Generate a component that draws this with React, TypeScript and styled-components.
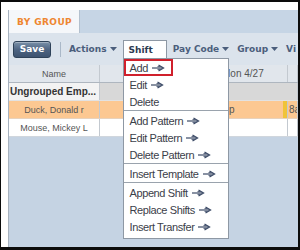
import React from 'react';
import styled, { createGlobalStyle } from 'styled-components';

const GlobalStyle = createGlobalStyle`
  html, body {
    margin: 0;
    padding: 0;
    background: #000;
  }
  body {
    font-family: 'Liberation Sans', Arial, sans-serif;
  }
`;

const COLS = '91px 99px 89px 1fr';

const Frame = styled.div`
  width: 300px;
  height: 250px;
  box-sizing: border-box;
  background: #0c0c0c;
  padding: 2px 2px 3px 1px;
  display: flex;
`;

const Sheet = styled.div`
  flex: 1;
  display: flex;
  background: #fff;
  padding: 8px 0 0 7px;
  overflow: hidden;
`;

const Panel = styled.div`
  flex: 1;
  display: flex;
  flex-direction: column;
  border-left: 1px solid #a7b2bf;
  background: #c5d3e3;
  min-width: 0;
`;

const TabStrip = styled.div`
  height: 23px;
  display: flex;
  background: #c6d5e5;
`;

const Tab = styled.div`
  width: 71px;
  display: flex;
  align-items: center;
  padding-left: 8px;
  box-sizing: border-box;
  background: #f5f7fa;
  border-right: 1px solid #b3c0ce;
  font-family: 'DejaVu Sans', Verdana, sans-serif;
  font-weight: bold;
  font-size: 9px;
  letter-spacing: 0.4px;
  color: #ee8630;
`;

const Toolbar = styled.div`
  height: 32px;
  display: flex;
  align-items: center;
  gap: 4px;
  padding-left: 4px;
  background: #dbe3ec;
  white-space: nowrap;
  font-family: 'DejaVu Sans', Verdana, sans-serif;
  font-weight: bold;
  font-size: 9px;
`;

const SaveButton = styled.div`
  width: 42px;
  height: 17px;
  box-sizing: border-box;
  display: flex;
  align-items: center;
  justify-content: center;
  border: 1px solid #2e4259;
  border-radius: 3px;
  background: linear-gradient(#7a90a8, #4b6280 55%, #3d5370);
  box-shadow: inset 0 1px 0 rgba(255, 255, 255, 0.3);
  color: #fff;
`;

const Divider = styled.div`
  width: 1px;
  height: 15px;
  margin: 0 2px 0 5px;
  background: #aab8c8;
`;

const MenuButton = styled.div<{ $active?: boolean }>`
  display: flex;
  align-items: center;
  gap: 3px;
  height: 18px;
  box-sizing: border-box;
  padding: ${p => (p.$active ? '0 13px 0 5px' : '0 2px')};
  color: ${p => (p.$active ? '#2e3b52' : '#4b5e7c')};
  background: ${p => (p.$active ? '#fff' : 'transparent')};
  border: ${p => (p.$active ? '1px solid #8e98a4' : 'none')};
  border-bottom: none;
`;

const MenuAnchor = styled.div`
  position: relative;
  z-index: 5;
`;

const Dropdown = styled.div`
  position: absolute;
  top: 100%;
  left: 0;
  width: 106px;
  box-sizing: border-box;
  padding-bottom: 3px;
  background: #fff;
  border: 1px solid #8e98a4;
  font-family: 'Liberation Sans', Arial, sans-serif;
  font-weight: normal;
  font-size: 11px;
  letter-spacing: -0.4px;
  color: #3b4049;
`;

const Item = styled.div<{ $highlight?: boolean }>`
  height: 17px;
  display: flex;
  align-items: center;
  gap: 4px;
  padding-left: 6px;
  box-sizing: border-box;
  width: ${p => (p.$highlight ? '49px' : 'auto')};
  box-shadow: ${p => (p.$highlight ? 'inset 0 0 0 2px #d0202c' : 'none')};
`;

const Rule = styled.div`
  border-top: 1px solid #9aa3ad;
  margin-bottom: 1px;
`;

const Row = styled.div<{ $bg: string; $line?: string }>`
  height: 18px;
  display: grid;
  grid-template-columns: ${COLS};
  background: ${p => p.$bg};
  box-sizing: border-box;
  border-bottom: 1px solid ${p => p.$line || '#e2e2e2'};
`;

const Cell = styled.div<{ $align?: string; $bold?: boolean; $size?: number; $bg?: string; $span?: boolean; $mark?: boolean; $pad?: number }>`
  display: flex;
  align-items: center;
  justify-content: ${p => p.$align || 'center'};
  padding-left: ${p => p.$pad ?? 0}px;
  overflow: hidden;
  white-space: nowrap;
  box-sizing: border-box;
  border-right: 1px solid #c3c9d0;
  font-size: ${p => p.$size || 9}px;
  font-weight: ${p => (p.$bold ? 'bold' : 'normal')};
  color: ${p => (p.$bold ? '#333' : '#555')};
  background: ${p => p.$bg || 'transparent'};
  grid-column: ${p => (p.$span ? '2 / -1' : 'auto')};
  box-shadow: ${p => (p.$mark ? 'inset -4px 0 0 #f0c33a' : 'none')};
`;

const Caret = () => (
  <svg width="7" height="4" viewBox="0 0 7 4">
    <path d="M0 0H7L3.5 4Z" fill="#4b5e7c" />
  </svg>
);

const Arrow = () => (
  <svg width="13" height="8" viewBox="0 0 13 8">
    <path d="M0 4H10.5" stroke="#3b4a66" strokeWidth="1.2" fill="none" />
    <path d="M6.5 1L11.5 4L6.5 7" stroke="#3b4a66" strokeWidth="1.3" fill="none" />
    <path d="M5.5 2.6H8.5M5.5 5.4H8.5" stroke="#3b4a66" strokeWidth="0.9" fill="none" />
  </svg>
);

type Entry = { label: string; arrow?: boolean; highlight?: boolean } | 'rule';

const menu: Entry[] = [
  { label: 'Add', arrow: true, highlight: true },
  { label: 'Edit', arrow: true },
  { label: 'Delete' },
  'rule',
  { label: 'Add Pattern', arrow: true },
  { label: 'Edit Pattern', arrow: true },
  { label: 'Delete Pattern', arrow: true },
  'rule',
  { label: 'Insert Template', arrow: true },
  'rule',
  { label: 'Append Shift', arrow: true },
  { label: 'Replace Shifts', arrow: true },
  { label: 'Insert Transfer', arrow: true },
];

export default function App() {
  return (
    <>
      <GlobalStyle />
      <Frame>
        <Sheet>
          <Panel>
            <TabStrip>
              <Tab>BY GROUP</Tab>
            </TabStrip>
            <Toolbar>
              <SaveButton>Save</SaveButton>
              <Divider />
              <MenuButton>Actions <Caret /></MenuButton>
              <MenuAnchor>
                <MenuButton $active>Shift</MenuButton>
                <Dropdown>
                  {menu.map((e, i) =>
                    e === 'rule' ? (
                      <Rule key={i} />
                    ) : (
                      <Item key={i} $highlight={e.highlight}>
                        {e.label}
                        {e.arrow && <Arrow />}
                      </Item>
                    )
                  )}
                </Dropdown>
              </MenuAnchor>
              <MenuButton>Pay Code <Caret /></MenuButton>
              <MenuButton>Group <Caret /></MenuButton>
              <MenuButton>Vi</MenuButton>
            </Toolbar>
            <Row $bg="#e1e6ec" $line="#aeb6bf">
              <Cell>Name</Cell>
              <Cell />
              <Cell $size={10} $align="flex-start" $pad={23}>Mon 4/27</Cell>
              <Cell />
            </Row>
            <Row $bg="#d8d8d8">
              <Cell $bold $size={10} $align="flex-start" $pad={1} $bg="#f3f3f3">Ungrouped Emp...</Cell>
              <Cell $span />
            </Row>
            <Row $bg="#fcc892" $line="#e8d2bc">
              <Cell>Duck, Donald r</Cell>
              <Cell />
              <Cell $size={10} $align="flex-start" $pad={10} $mark>8a-5p</Cell>
              <Cell $size={10} $align="flex-start" $pad={1}>8a-5p</Cell>
            </Row>
            <Row $bg="#fff" $line="#d0d6dd">
              <Cell>Mouse, Mickey L</Cell>
              <Cell />
              <Cell />
              <Cell />
            </Row>
          </Panel>
        </Sheet>
      </Frame>
    </>
  );
}
